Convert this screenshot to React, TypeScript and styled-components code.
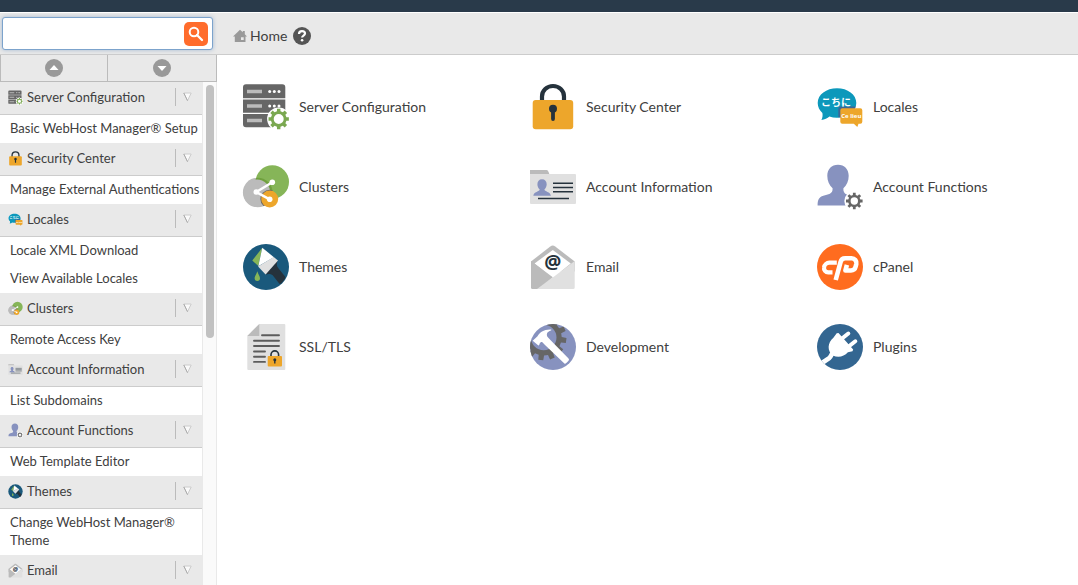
import React from 'react';
import styled, { createGlobalStyle } from 'styled-components';

const GlobalStyle = createGlobalStyle`
  *, *::before, *::after { box-sizing: border-box; }
  html, body { margin: 0; padding: 0; }
  body {
    background: #fff;
    color: #404040;
    font-family: Lato, "Noto Sans CJK JP", sans-serif;
    font-size: 13px;
    line-height: 18px;
  }
  a { color: inherit; text-decoration: none; }
  h2, ul { margin: 0; padding: 0; font: inherit; list-style: none; }
  button { font: inherit; color: inherit; cursor: pointer; }
`;

/* ---------- icons ---------- */

const gearPath = (cx: number, cy: number, body: number, tip: number, hole: number, teeth = 8, turn = 0) => {
  const step = (Math.PI * 2) / teeth;
  const at = (r: number, a: number) => `${(cx + r * Math.cos(a)).toFixed(2)},${(cy + r * Math.sin(a)).toFixed(2)}`;
  let d = '';
  for (let i = 0; i < teeth; i++) {
    const a = i * step + turn;
    d += `${i ? 'L' : 'M'}${at(body, a - step * 0.29)}L${at(tip, a - step * 0.21)}L${at(tip, a + step * 0.21)}L${at(body, a + step * 0.29)}`;
  }
  return `${d}ZM${cx - hole},${cy}a${hole},${hole} 0 1 0 ${hole * 2},0a${hole},${hole} 0 1 0 ${-hole * 2},0Z`;
};

const drawings: Record<string, React.ReactNode> = {
  server: (
    <>
      <path fill="#666" d="M1 15.3V4.3a3 3 0 0 1 3-3h36.3a3 3 0 0 1 3 3v11zM1 16.5h42.3v13.2H1zM1 30.9h42.3v10.4a3 3 0 0 1-3 3H4a3 3 0 0 1-3-3z" />
      <path fill="#bbb" d="M5 6.8h15v3.4H5zM5 21.3h15v3.4H5zM5 35.8h15v3.4H5z" />
      {[8.5, 23].map((y) => [27.7, 32.3, 37].map((x) => <circle key={`${x}-${y}`} cx={x} cy={y} r="1.5" fill="#fff" />))}
      <circle cx="36.7" cy="36" r="11.6" fill="#fff" />
      <path fill="#7aa850" fillRule="evenodd" d={gearPath(36.7, 36, 7.9, 10.3, 5, 8)} />
    </>
  ),
  lock: (
    <>
      <path d="M13 19v-5.6a11 10.4 0 0 1 22 0V19" fill="none" stroke="#25323c" strokeWidth="4.2" />
      <rect x="3.7" y="17" width="40.5" height="29.3" rx="3" fill="#eda62b" />
      <circle cx="24" cy="25.8" r="4" fill="#25323c" />
      <path d="M24 26v10" stroke="#25323c" strokeWidth="3.8" strokeLinecap="round" />
    </>
  ),
  locales: (
    <>
      <path fill="#0c98bb" d="M21 5.3c10.6 0 19.3 6.3 19.3 14.7S31.6 34.7 21 34.7c-2.7 0-5.3-.4-7.6-1.200-2 1.700-4.700 3-8 3.600 1-2 1.500-4.600 1-7.200C3.500 27.300 1.700 23.800 1.700 20 1.700 11.600 10.400 5.300 21 5.300z" />
      <path fill="#3d6696" d="M22.3 26a2.500 2.500 0 0 1 2.500-2.500h15c-1.600 5-7.800 9.500-15.300 10.800h-2.200z" />
      <text x="20" y="22.5" fontSize="10" textAnchor="middle" fill="#fff" fontWeight="700" fontFamily="Noto Sans CJK JP">こちに</text>
      <path fill="#eda62b" d="M26.3 25.3h18a2 2 0 0 1 2 2v11.400a2 2 0 0 1-2 2H42.500l-1.200 3.400-3.500-3.400H26.300a2 2 0 0 1-2-2V27.300a2 2 0 0 1 2-2z" />
      <text x="35.3" y="35" fontSize="6" textAnchor="middle" fill="#fff" fontWeight="700" fontFamily="Open Sans">Ce lieu</text>
    </>
  ),
  clusters: (
    <>
      <clipPath id="greenDisc"><circle cx="30.3" cy="19" r="16.7" /></clipPath>
      <clipPath id="grayDisc"><circle cx="15.7" cy="29.5" r="14.8" /></clipPath>
      <circle cx="15.7" cy="29.5" r="14.8" fill="#bbb" />
      <circle cx="30.3" cy="19" r="16.7" fill="#86b558" />
      <circle cx="15.7" cy="29.5" r="14.8" fill="#70a03e" clipPath="url(#greenDisc)" />
      <circle cx="14.9" cy="30" r="13.4" fill="#bbb" />
      <circle cx="27.7" cy="36" r="9.3" fill="#666" clipPath="url(#grayDisc)" />
      <circle cx="27.7" cy="36" r="8.5" fill="#eda62b" />
      <path d="M30.3 19.3 14.3 29l13.4 7.3" fill="none" stroke="#fff" strokeWidth="2.5" />
      <circle cx="30.3" cy="19.3" r="2.8" fill="#fff" />
      <circle cx="14.3" cy="29" r="2.8" fill="#fff" />
      <circle cx="27.7" cy="36.3" r="2.8" fill="#fff" />
    </>
  ),
  account: (
    <>
      <path fill="#bbb" d="M1 7h16.500c1.500 0 2 1.700 3 4.500H1z" />
      <path fill="#e0e0e0" d="M1 11h45a1 1 0 0 1 1 1v28a1 1 0 0 1-1 1H2a1 1 0 0 1-1-1z" />
      <path fill="#8792bf" d="M13 16.300c3 0 4.700 2 4.700 5 0 2.300-1 4-2.300 5.200.1 2.300 6 2 6.500 6.300H4.300c.5-4.300 6.300-4 6.400-6.300-1.400-1.200-2.300-3-2.300-5.200 0-3 1.700-5 4.600-5z" />
      <path d="M24 20.300h20M24 24.500h20M24 28.700h20M9 35.500h31" stroke="#25323c" strokeWidth="1.500" />
    </>
  ),
  person: (
    <>
      <path fill="#8792bf" d="M22 1.700c6.500 0 10.700 4.600 10.700 11 0 5-1.900 9.700-5.300 12.500-.4 5.600 3 6.300 7.300 7.600 3.300 1 3.800 4.500 3.800 9.600H1.600c0-5.700 1.400-8.300 5.700-9.700 4.900-1.500 9.700-1.600 9.300-7.500-3.400-2.800-5.300-7.500-5.300-12.500 0-6.400 4.200-11 10.700-11z" />
      <circle cx="38.3" cy="38" r="10" fill="#fff" />
      <path fill="#666" fillRule="evenodd" d={gearPath(38.3, 38, 6.2, 8.4, 3.7, 8)} />
    </>
  ),
  themes: (
    <>
      <circle cx="24" cy="24" r="23" fill="#1a597c" />
      <path fill="#25323c" d="M35.600 17.300c-1 3.500-1.300 5.700.8 8l6.600 8.300c.5.600.5 1.300 0 2a22 22 0 0 1-4 5c-.7.500-1.500.4-2-.3l-6.300-8c-2-1.500-4.500-1.500-7.300-.7z" />
      <path fill="#86b558" d="M20.300 4.700 10.300 17.500l6 5.500z" />
      <path fill="#fff" d="m20.300 4.700 11.600 9.500-15.600 9z" />
      <path fill="#e0e0e0" d="m31.700 13.900 4.300 3.500-12.400 14-7.500-8z" />
      <path fill="#86b558" d="M15.300 28.300c1 3.300 2.700 5 2.700 7a2.700 2.700 0 0 1-5.400 0c0-2 1.700-3.700 2.700-7z" />
    </>
  ),
  email: (
    <>
      <path fill="#bbb" d="M2 18.500 21.300 3.500c1.600-1.200 3.300-1.200 4.900 0l19.500 15v10H2z" />
      <path fill="#fff" d="M23.800 7 41.800 20.500 23.800 35 5.500 20.500z" />
      <path fill="#e0e0e0" d="M45.700 18V44.500a1.500 1.500 0 0 1-1.500 1.500H6L23.800 34.500z" />
      <path fill="#bbb" d="M2 18v26.500A1.500 1.500 0 0 0 3.500 46H8l15.800-11.800z" />
      <text x="23.8" y="26" fontSize="19" fontWeight="700" textAnchor="middle" fill="#25323c" fontFamily="Open Sans">@</text>
    </>
  ),
  cpanel: (
    <>
      <circle cx="24" cy="24" r="23" fill="#ff6c1f" />
      <g fill="none" stroke="#fff" strokeLinejoin="round">
        <path d="M20.800 19.700h-7.400a5.300 5.300 0 0 0-5.300 4.600 4.200 4.200 0 0 0 4.200 5h4.200" strokeWidth="4.200" />
        <path d="m19.700 37 4.900-18.200a4.800 4.800 0 0 1 4.700-3.600h6.300a4.800 4.800 0 0 1 4.700 5.800l-.7 2.800a4.800 4.800 0 0 1-4.700 3.700h-5.500l1.500-5.600" strokeWidth="4.600" />
      </g>
    </>
  ),
  ssl: (
    <>
      <path fill="#e0e0e0" d="M17.300 1h25a1 1 0 0 1 1 1v44a1 1 0 0 1-1 1h-36a1 1 0 0 1-1-1V13z" />
      <path fill="#bbb" d="M17.300 1v12h-12z" />
      <path d="M20 12.300h17M12 17.700h25M12 23h25M12 28.500h11M12 33.700h11M12 38.900h11" stroke="#5c5c5c" strokeWidth="1.900" strokeLinecap="round" />
      <path d="M29 34v-2.300a3.800 3.800 0 0 1 7.600 0V34" fill="none" stroke="#25323c" strokeWidth="1.600" />
      <rect x="25.7" y="33" width="14.3" height="10.5" rx="1" fill="#eda62b" />
      <circle cx="32.8" cy="36.7" r="1.5" fill="#25323c" />
      <path d="M32.800 37v3.500" stroke="#25323c" strokeWidth="1.400" />
    </>
  ),
  development: (
    <>
      <clipPath id="devDisc"><circle cx="24" cy="24" r="23" /></clipPath>
      <circle cx="24" cy="24" r="23" fill="#8792bf" />
      <path clipPath="url(#devDisc)" fill="#666" fillRule="evenodd" d={gearPath(14.7, 14.5, 18, 22.8, 12.8, 12, 0.13)} />
      <path fill="#fff" d="M3.700 17.700 8.500 13.300c2-3.800 6.500-7 13.300-6.700.7 0 .7.700.1.900-3.900 1.400-4.700 3.500-3.500 6.200l3 3.300 17.900 18.300c1 1 .9 1.800 0 2.700l-2 2c-1 1-1.900.8-2.700-.2L16 22l-2.900-2.900c-1.200-.6-2.200.3-2.800 2.700-.2.800-.9.900-1.500.3z" />
    </>
  ),
  plugins: (
    <>
      <clipPath id="plugDisc"><circle cx="24" cy="24" r="23" /></clipPath>
      <circle cx="24" cy="24" r="23" fill="#336691" />
      <g clipPath="url(#plugDisc)">
        <path d="M17 29.500c-2 2-1.500 3.600-3.500 5.300L3 42" fill="none" stroke="#fff" strokeWidth="4.600" />
        <path fill="#fff" d="m20.700 10.200 1.800-.3 14.700 16.700-.7 1.700-4.600 1c-4 4.600-9.900 5.500-15.100 3.200-5.800-4.600-5.500-12.500.6-17.700z" />
        <path d="m26 15.500 6.300-5M33.300 23l6-4.700" stroke="#fff" strokeWidth="4" strokeLinecap="round" />
      </g>
    </>
  ),
};

const Drawing = styled.svg<{ $size: number }>`
  display: block;
  flex: none;
  width: ${(p) => p.$size}px;
  height: ${(p) => p.$size}px;
`;

const FeatureIcon = ({ name, size }: { name: string; size: number }) => (
  <Drawing $size={size} viewBox="0 0 48 48" aria-hidden="true">{drawings[name]}</Drawing>
);

/* ---------- page frame ---------- */

const Page = styled.div`
  display: flex;
  flex-direction: column;
  height: 100vh;
  overflow: hidden;
`;

const TopStripe = styled.div`
  flex: none;
  height: 13px;
  background: #293a4a;
  border-bottom: 1px solid #fff;
`;

const Header = styled.header`
  flex: none;
  display: flex;
  align-items: center;
  height: 42px;
  background: #e9e9e9;
  border-bottom: 1px solid #ccc;
`;

const SearchForm = styled.form`
  display: flex;
  align-items: center;
  width: 211px;
  height: 33px;
  margin: 0 20px 0 2px;
  padding-right: 4px;
  background: #fff;
  border: 1px solid #7ca3cc;
  border-radius: 3px;
  box-shadow: 0 0 4px #a3b8d0;
`;

const SearchInput = styled.input`
  flex: 1;
  min-width: 0;
  height: 28px;
  padding: 0 8px;
  border: 0;
  outline: 0;
  background: transparent;
  font: inherit;
`;

const SearchButton = styled.button`
  display: grid;
  place-items: center;
  width: 24px;
  height: 24px;
  padding: 0;
  border: 0;
  border-radius: 5px;
  background: #ff6c2c;
`;

const Breadcrumb = styled.nav`
  display: flex;
  align-items: center;
  gap: 6px;
  padding-top: 5px;
  font-size: 14px;
`;

const HomeLink = styled.a`
  display: flex;
  align-items: center;
  gap: 3px;
`;

const HelpButton = styled.button`
  display: grid;
  place-items: center;
  padding: 0;
  border: 0;
  background: none;
`;

const Body = styled.div`
  flex: 1;
  display: flex;
  min-height: 0;
`;

/* ---------- sidebar ---------- */

const Sidebar = styled.aside`
  flex: none;
  display: flex;
  flex-direction: column;
  width: 217px;
  border-right: 1px solid #e9e9e9;
`;

const FoldBar = styled.div`
  flex: none;
  display: grid;
  grid-template-columns: 106px 1fr;
  height: 27px;
  margin-right: -1px;
  border: 1px solid #bbb;
  border-top: 0;
  background: #e9e9e9;
`;

const FoldButton = styled.button`
  display: grid;
  place-items: center;
  padding: 0;
  border: 0;
  background: none;

  & + & { border-left: 1px solid #bbb; }
`;

const ScrollArea = styled.div`
  flex: 1;
  display: flex;
  min-height: 0;
  overflow: hidden;
`;

const MenuList = styled.nav`
  flex: 1;
  min-width: 0;
`;

const ScrollTrack = styled.div`
  width: 14px;
  padding: 3px;
  background: #fafafa;
  border-left: 1px solid #e9e9e9;
`;

const ScrollThumb = styled.div`
  width: 8px;
  height: 51%;
  border-radius: 4px;
  background: #c1c1c1;
`;

const GroupHeader = styled.h2`
  display: flex;
  align-items: center;
  gap: 4px;
  height: 33px;
  padding: 0 0 2px 8px;
  background: #e9e9e9;
  border-bottom: 1px solid #ccc;
`;

const GroupLink = styled.a`
  flex: 1;
  white-space: nowrap;
`;

const GroupToggle = styled.button`
  display: grid;
  place-items: center;
  width: 27px;
  height: 18px;
  padding: 0 3px 0 0;
  border: 0;
  border-left: 1px solid #bbb;
  background: none;
`;

const GroupItem = styled.li`
  padding: 4px 0 6px 10px;
`;

const groups = [
  { title: 'Server Configuration', icon: 'server', items: ['Basic WebHost Manager® Setup'] },
  { title: 'Security Center', icon: 'lock', items: ['Manage External Authentications'] },
  { title: 'Locales', icon: 'locales', items: ['Locale XML Download', 'View Available Locales'] },
  { title: 'Clusters', icon: 'clusters', items: ['Remote Access Key'] },
  { title: 'Account Information', icon: 'account', items: ['List Subdomains'] },
  { title: 'Account Functions', icon: 'person', items: ['Web Template Editor'] },
  { title: 'Themes', icon: 'themes', items: ['Change WebHost Manager® Theme'] },
  { title: 'Email', icon: 'email', items: [] },
];

const FoldIcon = ({ down = false }: { down?: boolean }) => (
  <svg width="18" height="18" viewBox="0 0 18 18" aria-hidden="true">
    <circle cx="9" cy="9" r="9" fill="#999" />
    <path d={down ? 'M4.500 7h9L9 12z' : 'M4.500 11h9L9 6z'} fill="#fff" />
  </svg>
);

const Group = ({ title, icon, items }: { title: string; icon: string; items: string[] }) => (
  <section>
    <GroupHeader>
      <FeatureIcon name={icon} size={15} />
      <GroupLink href="#">{title}</GroupLink>
      <GroupToggle type="button" aria-label={`Collapse ${title}`}>
        <svg width="9" height="10" viewBox="0 0 9 10" aria-hidden="true">
          <path d="M.8 1h7.400L4.500 8.700z" fill="#fafafa" stroke="#ccc" />
          <path d="M.8 1 4.500 8.700" stroke="#aaa" fill="none" />
        </svg>
      </GroupToggle>
    </GroupHeader>
    <ul>
      {items.map((item) => (
        <GroupItem key={item}><a href="#">{item}</a></GroupItem>
      ))}
    </ul>
  </section>
);

/* ---------- main area ---------- */

const Main = styled.main`
  flex: 1;
  padding-top: 12px;
`;

const FeatureGrid = styled.ul`
  display: grid;
  grid-template-columns: repeat(3, 1fr);
  grid-auto-rows: 80px;
`;

const FeatureLink = styled.a`
  display: flex;
  align-items: center;
  gap: 9px;
  height: 100%;
  padding-left: 25px;
  font-size: 14px;
`;

const features = [
  ['Server Configuration', 'server'],
  ['Security Center', 'lock'],
  ['Locales', 'locales'],
  ['Clusters', 'clusters'],
  ['Account Information', 'account'],
  ['Account Functions', 'person'],
  ['Themes', 'themes'],
  ['Email', 'email'],
  ['cPanel', 'cpanel'],
  ['SSL/TLS', 'ssl'],
  ['Development', 'development'],
  ['Plugins', 'plugins'],
];

export default function App() {
  return (
    <Page>
      <GlobalStyle />
      <TopStripe />
      <Header>
        <SearchForm role="search" onSubmit={(e) => e.preventDefault()}>
          <SearchInput type="text" aria-label="Search" />
          <SearchButton type="submit" aria-label="Search">
            <svg width="16" height="16" viewBox="0 0 16 16" aria-hidden="true">
              <circle cx="6" cy="6" r="4.3" fill="none" stroke="#fff" strokeWidth="2" />
              <path d="m9 9 5 5" stroke="#fff" strokeWidth="2.3" strokeLinecap="round" />
            </svg>
          </SearchButton>
        </SearchForm>
        <Breadcrumb aria-label="Breadcrumb">
          <HomeLink href="#">
            <svg width="14" height="14" viewBox="0 0 14 14" aria-hidden="true">
              <path fill="#999" fillRule="evenodd" d="M7 .8 9.800 3.300V2h2v3.200L14 7.500h-1.500V13H1.800V7.500H0zM8 8.300V11h2.700V8.300z" />
            </svg>
            Home
          </HomeLink>
          <HelpButton type="button" aria-label="Help">
            <svg width="18" height="18" viewBox="0 0 18 18" aria-hidden="true">
              <circle cx="9" cy="9" r="9" fill="#555" />
              <path d="M6 7c0-1.900 1.300-2.900 3-2.900s3 1 3 2.500c0 2-2.900 2-2.900 4" fill="none" stroke="#fff" strokeWidth="2.2" />
              <circle cx="9.1" cy="13.3" r="1.3" fill="#fff" />
            </svg>
          </HelpButton>
        </Breadcrumb>
      </Header>
      <Body>
        <Sidebar>
          <FoldBar>
            <FoldButton type="button" aria-label="Collapse all"><FoldIcon /></FoldButton>
            <FoldButton type="button" aria-label="Expand all"><FoldIcon down /></FoldButton>
          </FoldBar>
          <ScrollArea>
            <MenuList>
              {groups.map((group) => <Group key={group.title} {...group} />)}
            </MenuList>
            <ScrollTrack><ScrollThumb /></ScrollTrack>
          </ScrollArea>
        </Sidebar>
        <Main>
          <FeatureGrid>
            {features.map(([label, icon]) => (
              <li key={label}>
                <FeatureLink href="#">
                  <FeatureIcon name={icon} size={48} />
                  {label}
                </FeatureLink>
              </li>
            ))}
          </FeatureGrid>
        </Main>
      </Body>
    </Page>
  );
}
